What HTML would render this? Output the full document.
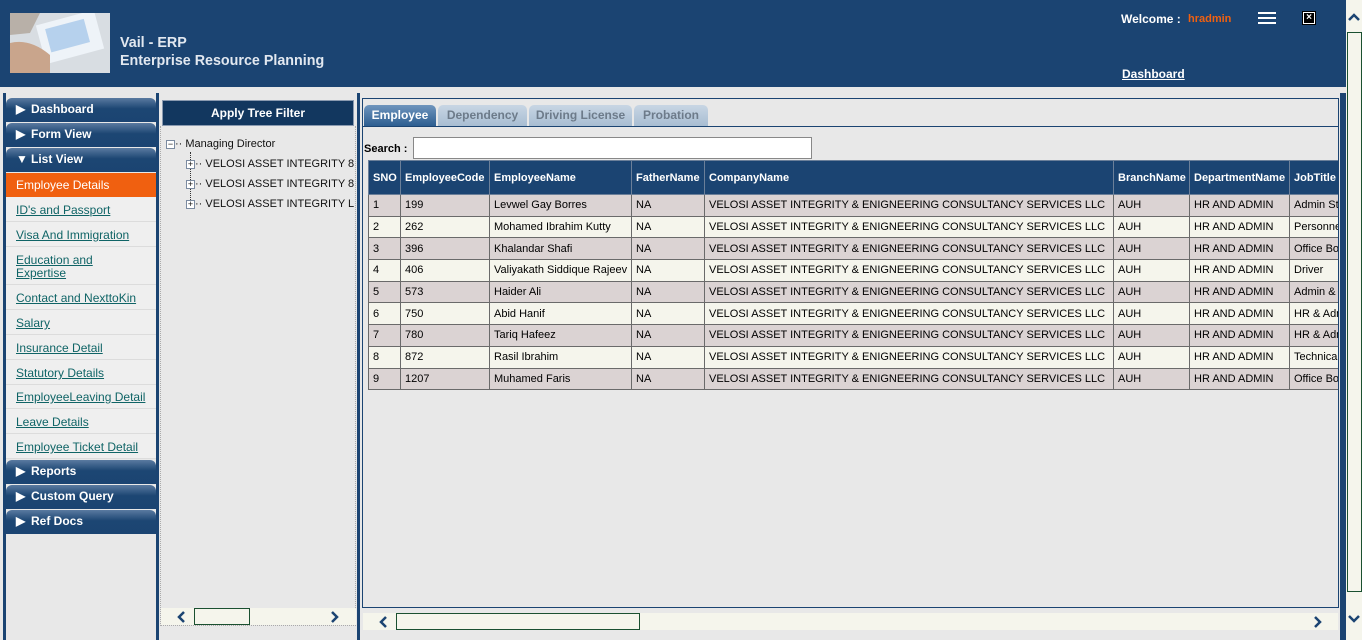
<!DOCTYPE html>
<html><head><style>
*{margin:0;padding:0;box-sizing:border-box}
body{width:1362px;height:640px;overflow:hidden;background:#e8e8e8;font-family:"Liberation Sans",Arial,sans-serif;position:relative}
.a{position:absolute}
.hdr{left:0;top:0;width:1346px;height:87px;background:#1b4472}
.menu{position:absolute;left:6px;width:150px;height:24px;border-radius:6px 6px 0 0;background:linear-gradient(#5a7aa0,#1c4673 45%,#1b4472);color:#fff;font-weight:bold;font-size:12px;line-height:23px;padding-left:10px}
.menu span{display:inline-block;width:15px}
.lk{position:absolute;left:6px;width:150px;background:#efefef;border-bottom:1px solid #dcdcdc;font-size:12px;color:#0f6466;text-decoration:underline;padding-left:10px;line-height:13px}
table{border-collapse:collapse;font-size:11px;table-layout:fixed}
td,th{border:1px solid #6a6a6a;padding:0 4px;white-space:nowrap;overflow:hidden;height:21.7px;text-align:left}
th{background:#1b4472;color:#fff;height:34px;border-color:#6b7f99}
tr.o td{background:#dbd3d3}
tr.e td{background:#f5f5ec}
.tab{position:absolute;top:105px;height:21px;border-radius:5px 5px 0 0;background:linear-gradient(#c8d6e4,#a8bdd2);color:#6d7b8a;font-weight:bold;font-size:12px;line-height:20px;text-align:center}
.tv{font-size:11px;color:#111}
.pb{width:9px;height:9px;border:1px solid #7a8aa0;background:#fff;font-size:9px;line-height:7px;text-align:center;display:inline-block}
</style></head><body>
<div class="a hdr"></div>
<svg class="a" style="left:10px;top:13px" width="100" height="60"><rect width="100" height="60" fill="#d8dde2"/><rect x="30" y="4" width="60" height="40" fill="#eef3f8" transform="rotate(-15 60 24)"/><rect x="38" y="10" width="40" height="24" fill="#9ec2e8" opacity=".7" transform="rotate(-15 60 24)"/><path d="M0 30 Q20 25 40 42 L40 60 L0 60Z" fill="#c9a58c"/><path d="M0 0 L30 0 L20 20 L0 22Z" fill="#b8b0a8"/></svg>
<div class="a" style="left:120px;top:34px;color:#e2e8f0;font-weight:bold;font-size:14.3px;line-height:18px">Vail - ERP<br>Enterprise Resource Planning</div>
<div class="a" style="left:1121px;top:12px;color:#fff;font-weight:bold;font-size:12px">Welcome :</div>
<div class="a" style="left:1188px;top:13px;color:#f06010;font-weight:bold;font-size:11px">hradmin</div>
<div class="a" style="left:1258px;top:12px;width:18px;height:2px;background:#fff;box-shadow:0 5px 0 #fff,0 10px 0 #fff"></div>
<div class="a" style="left:1302px;top:11px;width:14px;height:14px;background:#fff;border:1px solid #000;font-size:11px;line-height:11px;text-align:center;font-weight:bold"><span style="background:#000;color:#fff;display:block;margin:1px;height:10px;line-height:10px;font-size:10px">×</span></div>
<div class="a" style="left:1122px;top:67px;color:#fff;font-weight:bold;font-size:12px;text-decoration:underline">Dashboard</div>

<!-- page scrollbar -->
<div class="a" style="left:1346px;top:0;width:16px;height:640px;background:#f5f5ec"></div>
<div class="a" style="left:1347px;top:32px;width:15px;height:560px;border:1px solid #1a5030"></div>
<svg class="a" style="left:1348px;top:12px" width="12" height="10"><path d="M1 8 L6 3 L11 8" fill="none" stroke="#1b4472" stroke-width="2.5"/></svg>
<svg class="a" style="left:1348px;top:614px" width="12" height="10"><path d="M1 2 L6 7 L11 2" fill="none" stroke="#1b4472" stroke-width="2.5"/></svg>
<div class="a" style="left:1340px;top:93px;width:6px;height:547px;background:#1b4472"></div>

<!-- left panel -->
<div class="a" style="left:3px;top:93px;width:3px;height:547px;background:#1b4472"></div>
<div class="a" style="left:156px;top:93px;width:3px;height:547px;background:#1b4472"></div>
<div class="menu" style="top:98px"><span>&#9654;</span>Dashboard</div>
<div class="menu" style="top:123px"><span>&#9654;</span>Form View</div>
<div class="menu" style="top:148px"><span>&#9660;</span>List View</div>
<div class="a" style="left:6px;top:173px;width:150px;height:24px;background:#f06010;color:#fff;font-size:12px;line-height:24px;padding-left:10px">Employee Details</div>
<div class="lk" style="top:197px;height:25px;padding-top:7px">ID's and Passport</div>
<div class="lk" style="top:222px;height:25px;padding-top:7px">Visa And Immigration</div>
<div class="lk" style="top:247px;height:38px;padding-top:7px">Education and<br>Expertise</div>
<div class="lk" style="top:285px;height:25px;padding-top:7px">Contact and NexttoKin</div>
<div class="lk" style="top:310px;height:25px;padding-top:7px">Salary</div>
<div class="lk" style="top:335px;height:25px;padding-top:7px">Insurance Detail</div>
<div class="lk" style="top:360px;height:25px;padding-top:7px">Statutory Details</div>
<div class="lk" style="top:385px;height:24px;padding-top:6px">EmployeeLeaving Detail</div>
<div class="lk" style="top:409px;height:25px;padding-top:7px">Leave Details</div>
<div class="lk" style="top:434px;height:25px;padding-top:7px">Employee Ticket Detail</div>
<div class="menu" style="top:460px"><span>&#9654;</span>Reports</div>
<div class="menu" style="top:485px"><span>&#9654;</span>Custom Query</div>
<div class="menu" style="top:510px"><span>&#9654;</span>Ref Docs</div>

<!-- tree panel -->
<div class="a" style="left:357px;top:93px;width:3px;height:547px;background:#1b4472"></div>
<div class="a" style="left:162px;top:100px;width:192px;height:26px;background:#12375f;border:1px solid #8a9ab0;color:#fff;font-weight:bold;font-size:12px;text-align:center;line-height:24px">Apply Tree Filter</div>
<div class="a" style="left:160px;top:126px;width:196px;height:500px;border:1px dotted #aaa;border-top:none"></div>
<div class="a tv" style="left:166px;top:138px"><span class="pb">−</span>·· Managing Director</div>
<div class="a" style="left:190px;top:152px;height:50px;border-left:1px dotted #333"></div>
<div class="a tv" style="left:186px;top:158px;white-space:nowrap;width:170px;overflow:hidden"><span class="pb">+</span>·· VELOSI ASSET INTEGRITY 8</div>
<div class="a tv" style="left:186px;top:178px;white-space:nowrap;width:170px;overflow:hidden"><span class="pb">+</span>·· VELOSI ASSET INTEGRITY 8</div>
<div class="a tv" style="left:186px;top:198px;white-space:nowrap;width:170px;overflow:hidden"><span class="pb">+</span>·· VELOSI ASSET INTEGRITY L</div>
<div class="a" style="left:161px;top:608px;width:195px;height:17px;background:#f5f5ec"></div>
<div class="a" style="left:194px;top:608px;width:56px;height:17px;border:1px solid #1a5030"></div>
<svg class="a" style="left:177px;top:611px" width="10" height="12"><path d="M7 1 L2 6 L7 11" fill="none" stroke="#1b4472" stroke-width="2.5"/></svg>
<svg class="a" style="left:329px;top:611px" width="10" height="12"><path d="M3 1 L8 6 L3 11" fill="none" stroke="#1b4472" stroke-width="2.5"/></svg>

<!-- main panel -->
<div class="a" style="left:362px;top:98px;width:977px;height:510px;border:1px solid #1b4472"></div>
<div class="a" style="left:363px;top:126px;width:975px;height:1px;background:#1b4472"></div>
<div class="tab" style="left:364px;width:72px;background:linear-gradient(#6f95bd,#2d5e91);color:#fff">Employee</div>
<div class="tab" style="left:438px;width:89px">Dependency</div>
<div class="tab" style="left:529px;width:103px">Driving License</div>
<div class="tab" style="left:634px;width:74px">Probation</div>
<div class="a" style="left:364px;top:143px;font-weight:bold;font-size:11px">Search :</div>
<div class="a" style="left:413px;top:137px;width:399px;height:22px;background:#fff;border:1px solid #888"></div>
<div class="a" style="left:368px;top:160px;width:970px;height:230px;overflow:hidden">
<table style="width:1010px"><colgroup><col style="width:32px"><col style="width:89px"><col style="width:142px"><col style="width:73px"><col style="width:409px"><col style="width:76px"><col style="width:100px"><col style="width:89px"></colgroup>
<tr><th>SNO</th><th>EmployeeCode</th><th>EmployeeName</th><th>FatherName</th><th>CompanyName</th><th>BranchName</th><th>DepartmentName</th><th>JobTitle</th></tr>
<tr class="o"><td>1</td><td>199</td><td>Levwel Gay Borres</td><td>NA</td><td>VELOSI ASSET INTEGRITY &amp; ENIGNEERING CONSULTANCY SERVICES LLC</td><td>AUH</td><td>HR AND ADMIN</td><td>Admin Staff</td></tr>
<tr class="e"><td>2</td><td>262</td><td>Mohamed Ibrahim Kutty</td><td>NA</td><td>VELOSI ASSET INTEGRITY &amp; ENIGNEERING CONSULTANCY SERVICES LLC</td><td>AUH</td><td>HR AND ADMIN</td><td>Personnel</td></tr>
<tr class="o"><td>3</td><td>396</td><td>Khalandar Shafi</td><td>NA</td><td>VELOSI ASSET INTEGRITY &amp; ENIGNEERING CONSULTANCY SERVICES LLC</td><td>AUH</td><td>HR AND ADMIN</td><td>Office Boy</td></tr>
<tr class="e"><td>4</td><td>406</td><td>Valiyakath Siddique Rajeev</td><td>NA</td><td>VELOSI ASSET INTEGRITY &amp; ENIGNEERING CONSULTANCY SERVICES LLC</td><td>AUH</td><td>HR AND ADMIN</td><td>Driver</td></tr>
<tr class="o"><td>5</td><td>573</td><td>Haider Ali</td><td>NA</td><td>VELOSI ASSET INTEGRITY &amp; ENIGNEERING CONSULTANCY SERVICES LLC</td><td>AUH</td><td>HR AND ADMIN</td><td>Admin &amp;</td></tr>
<tr class="e"><td>6</td><td>750</td><td>Abid Hanif</td><td>NA</td><td>VELOSI ASSET INTEGRITY &amp; ENIGNEERING CONSULTANCY SERVICES LLC</td><td>AUH</td><td>HR AND ADMIN</td><td>HR &amp; Adm</td></tr>
<tr class="o"><td>7</td><td>780</td><td>Tariq Hafeez</td><td>NA</td><td>VELOSI ASSET INTEGRITY &amp; ENIGNEERING CONSULTANCY SERVICES LLC</td><td>AUH</td><td>HR AND ADMIN</td><td>HR &amp; Adm</td></tr>
<tr class="e"><td>8</td><td>872</td><td>Rasil Ibrahim</td><td>NA</td><td>VELOSI ASSET INTEGRITY &amp; ENIGNEERING CONSULTANCY SERVICES LLC</td><td>AUH</td><td>HR AND ADMIN</td><td>Technical</td></tr>
<tr class="o"><td>9</td><td>1207</td><td>Muhamed Faris</td><td>NA</td><td>VELOSI ASSET INTEGRITY &amp; ENIGNEERING CONSULTANCY SERVICES LLC</td><td>AUH</td><td>HR AND ADMIN</td><td>Office Boy</td></tr>
</table></div>
<div class="a" style="left:363px;top:613px;width:975px;height:17px;background:#f5f5ec"></div>
<div class="a" style="left:396px;top:613px;width:244px;height:17px;border:1px solid #1a5030"></div>
<svg class="a" style="left:379px;top:616px" width="10" height="12"><path d="M7 1 L2 6 L7 11" fill="none" stroke="#1b4472" stroke-width="2.5"/></svg>
<svg class="a" style="left:1312px;top:616px" width="10" height="12"><path d="M3 1 L8 6 L3 11" fill="none" stroke="#1b4472" stroke-width="2.5"/></svg>
</body></html>
